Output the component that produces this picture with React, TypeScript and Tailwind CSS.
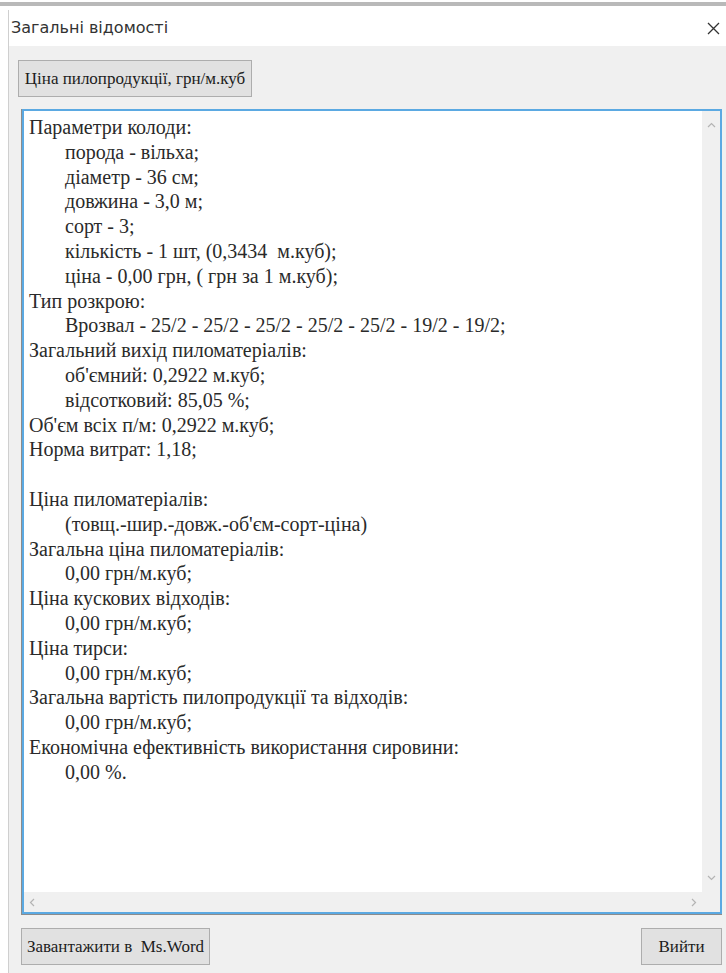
import { ReactNode } from "react";

type Line = { text: string; indent?: boolean };

const reportLines: Line[] = [
  { text: "Параметри колоди:" },
  { text: "порода - вільха;", indent: true },
  { text: "діаметр - 36 см;", indent: true },
  { text: "довжина - 3,0 м;", indent: true },
  { text: "сорт - 3;", indent: true },
  { text: "кількість - 1 шт, (0,3434  м.куб);", indent: true },
  { text: "ціна - 0,00 грн, ( грн за 1 м.куб);", indent: true },
  { text: "Тип розкрою:" },
  { text: "Врозвал - 25/2 - 25/2 - 25/2 - 25/2 - 25/2 - 19/2 - 19/2;", indent: true },
  { text: "Загальний вихід пиломатеріалів:" },
  { text: "об'ємний: 0,2922 м.куб;", indent: true },
  { text: "відсотковий: 85,05 %;", indent: true },
  { text: "Об'єм всіх п/м: 0,2922 м.куб;" },
  { text: "Норма витрат: 1,18;" },
  { text: "" },
  { text: "Ціна пиломатеріалів:" },
  { text: "(товщ.-шир.-довж.-об'єм-сорт-ціна)", indent: true },
  { text: "Загальна ціна пиломатеріалів:" },
  { text: "0,00 грн/м.куб;", indent: true },
  { text: "Ціна кускових відходів:" },
  { text: "0,00 грн/м.куб;", indent: true },
  { text: "Ціна тирси:" },
  { text: "0,00 грн/м.куб;", indent: true },
  { text: "Загальна вартість пилопродукції та відходів:" },
  { text: "0,00 грн/м.куб;", indent: true },
  { text: "Економічна ефективність використання сировини:" },
  { text: "0,00 %.", indent: true },
];

function WinButton({ children, className }: { children: ReactNode; className?: string }) {
  return (
    <button
      className={`h-[37px] whitespace-nowrap border border-[#adadad] bg-[#e1e1e1] text-[17px] text-[#1c1c1c] font-[family-name:Liberation_Serif,Noto_Sans,serif] ${className ?? ""}`}
    >
      {children}
    </button>
  );
}

function Chevron({ d }: { d: string }) {
  return (
    <svg width="9" height="9" viewBox="0 0 9 9" fill="none" stroke="#b4b4b4" strokeWidth="1.2">
      <path d={d} />
    </svg>
  );
}

export default function App() {
  return (
    <div className="w-[726px] h-[973px] bg-white overflow-hidden flex flex-col">
      {/* strip of the window behind */}
      <div className="h-[10px] flex flex-col">
        <div className="h-[2px]" />
        <div className="h-[4px] bg-[#b9b9b9]" />
      </div>

      <div className="flex-1 ml-[8px] border-l border-[#cfcfcf] flex flex-col">
        {/* title bar */}
        <div className="h-[36px] bg-white flex items-center justify-between pl-[2px] pr-[6px]">
          <span className="text-[16px] text-[#333] font-[family-name:DejaVu_Sans,sans-serif]">Загальні відомості</span>
          <svg width="13" height="13" viewBox="0 0 13 13" stroke="#333" strokeWidth="1.3">
            <path d="M1 1L12 12M12 1L1 12" />
          </svg>
        </div>

        <div className="flex-1 bg-[#f0f0f0] flex flex-col pl-[9px] pr-[4px] pt-[14px]">
          <div className="flex">
            <WinButton className="w-[234px]">Ціна пилопродукції, грн/м.куб</WinButton>
          </div>

          {/* report box */}
          <div className="mt-[12px] ml-[3px] h-[806px] border-l border-b border-[#8c8c8c]">
            <div className="h-full border-2 border-[#5ba9e2] bg-white flex flex-col">
              <div className="flex-1 flex min-h-0">
                <div className="flex-1 pl-[5px] pt-[4px] text-[20px] leading-[24.8px] text-[#2a2a2a] font-[family-name:Liberation_Serif,Noto_Sans,serif]">
                  {reportLines.map((line, i) => (
                    <div key={i} className={`h-[24.8px] whitespace-pre ${line.indent ? "pl-[36px]" : ""}`}>
                      {line.text}
                    </div>
                  ))}
                </div>
                <div className="w-[18px] bg-[#f0f0f0] flex flex-col items-center justify-between py-[10px]">
                  <Chevron d="M1 6L4.5 2.5L8 6" />
                  <Chevron d="M1 3L4.5 6.5L8 3" />
                </div>
              </div>
              <div className="h-[20px] flex">
                <div className="flex-1 bg-[#f0f0f0] flex items-center justify-between px-[4px]">
                  <Chevron d="M6 1L2.5 4.5L6 8" />
                  <Chevron d="M3 1L6.5 4.5L3 8" />
                </div>
                <div className="w-[18px] bg-[#f0f0f0]" />
              </div>
            </div>
          </div>

          <div className="mt-[13px] ml-[3px] flex justify-between">
            <WinButton className="w-[189px]">Завантажити в&nbsp;&nbsp;Ms.Word</WinButton>
            <WinButton className="w-[81px]">Вийти</WinButton>
          </div>
        </div>
      </div>
    </div>
  );
}
